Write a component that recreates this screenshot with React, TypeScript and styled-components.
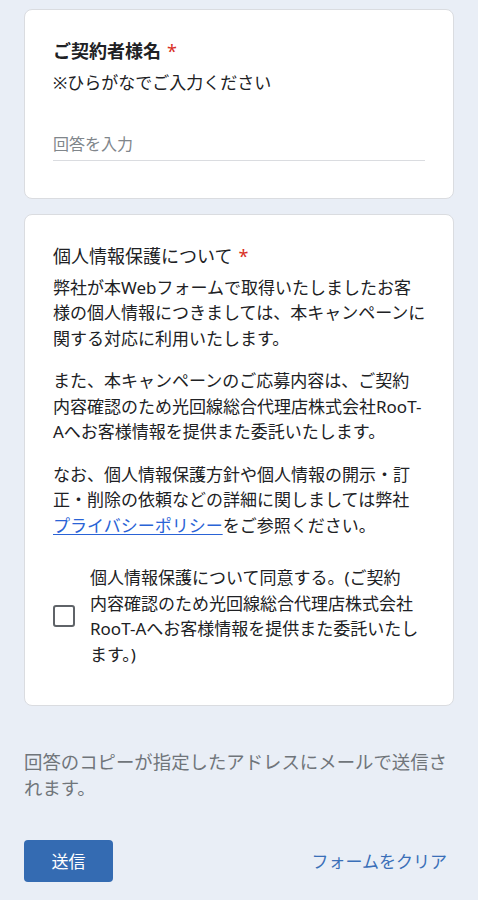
import React, { useState } from 'react';
import styled, { createGlobalStyle } from 'styled-components';

const GlobalStyle = createGlobalStyle`
  html, body {
    margin: 0;
    padding: 0;
    background: #e9eef6;
  }
  body {
    font-family: "Noto Sans", "Noto Sans CJK JP", sans-serif;
    color: #202124;
    -webkit-font-smoothing: antialiased;
  }
`;

const App = () => {
  const [agreed, setAgreed] = useState(false);
  const [name, setName] = useState('');

  return (
    <>
      <GlobalStyle />
      <Page>
        <Card>
          <QuestionTitle $bold>
            ご契約者様名<Required>*</Required>
          </QuestionTitle>
          <Description>※ひらがなでご入力ください</Description>
          <InputWrap>
            <TextInput
              value={name}
              onChange={(e) => setName(e.target.value)}
              placeholder="回答を入力"
            />
          </InputWrap>
        </Card>

        <Card>
          <QuestionTitle>
            個人情報保護について<Required>*</Required>
          </QuestionTitle>
          <Body>
            <Paragraph>
              弊社が本Webフォームで取得いたしましたお客<br />
              様の個人情報につきましては、本キャンペーンに<br />
              関する対応に利用いたします。
            </Paragraph>
            <Paragraph>
              また、本キャンペーンのご応募内容は、ご契約<br />
              内容確認のため光回線総合代理店株式会社RooT-<br />
              Aへお客様情報を提供また委託いたします。
            </Paragraph>
            <Paragraph>
              なお、個人情報保護方針や個人情報の開示・訂<br />
              正・削除の依頼などの詳細に関しましては弊社<br />
              <Link href="#">プライバシーポリシー</Link>をご参照ください。
            </Paragraph>
          </Body>

          <CheckRow onClick={() => setAgreed(!agreed)}>
            <CheckBox $checked={agreed} />
            <CheckLabel>
              個人情報保護について同意する。(ご契約<br />
              内容確認のため光回線総合代理店株式会社<br />
              RooT-Aへお客様情報を提供また委託いたし<br />
              ます。)
            </CheckLabel>
          </CheckRow>
        </Card>

        <Notice>回答のコピーが指定したアドレスにメールで送信されます。</Notice>

        <Actions>
          <SubmitButton type="button">送信</SubmitButton>
          <ClearButton type="button">フォームをクリア</ClearButton>
        </Actions>
      </Page>
    </>
  );
};

const Page = styled.div`
  display: flex;
  flex-direction: column;
  gap: 15px;
  padding: 9px 24px 19px 24px;
`;

const Card = styled.section`
  background: #ffffff;
  border: 1px solid #dadce0;
  border-radius: 8px;
  padding: 28px 26px 37px 28px;
`;

const QuestionTitle = styled.div<{ $bold?: boolean }>`
  font-size: 18px;
  line-height: 27px;
  font-weight: ${({ $bold }) => ($bold ? 700 : 400)};
  color: #202124;
`;

const Required = styled.span`
  color: #d93025;
  margin-left: 6px;
  font-weight: 400;
`;

const Description = styled.div`
  margin-top: 5px;
  font-size: 17px;
  line-height: 25.5px;
  color: #202124;
`;

const InputWrap = styled.div`
  margin-top: 36px;
  margin-right: 2px;
  border-bottom: 1px solid #dadce0;
`;

const TextInput = styled.input`
  display: block;
  width: 100%;
  box-sizing: border-box;
  border: none;
  outline: none;
  background: transparent;
  padding: 0 0 4px 0;
  height: 28px;
  font-family: inherit;
  font-size: 16px;
  line-height: 24px;
  color: #202124;

  &::placeholder {
    color: #80868b;
  }
`;

const Body = styled.div`
  margin-top: 5px;
`;

const Paragraph = styled.p`
  margin: 0 0 17px 0;
  font-size: 17px;
  line-height: 25.5px;
  color: #202124;

  &:last-child {
    margin-bottom: 0;
  }
`;

const Link = styled.a`
  color: #2a63d6;
  text-decoration: underline;
  text-underline-offset: 2px;
`;

const CheckRow = styled.div`
  margin-top: 27px;
  display: flex;
  align-items: center;
  gap: 15px;
  cursor: pointer;
`;

const CheckBox = styled.div<{ $checked: boolean }>`
  flex: none;
  width: 22px;
  height: 22px;
  box-sizing: border-box;
  border: 2px solid ${({ $checked }) => ($checked ? '#346bb2' : '#5f6368')};
  background: ${({ $checked }) => ($checked ? '#346bb2' : 'transparent')};
  border-radius: 3px;
`;

const CheckLabel = styled.div`
  font-size: 17px;
  line-height: 25.7px;
  color: #202124;
`;

const Notice = styled.p`
  margin: 28px 0 0 0;
  font-size: 18.4px;
  line-height: 26px;
  color: #70757a;
`;

const Actions = styled.div`
  margin-top: 24px;
  display: flex;
  align-items: center;
  justify-content: space-between;
`;

const SubmitButton = styled.button`
  width: 89px;
  height: 42px;
  border: none;
  border-radius: 4px;
  background: #346bb2;
  color: #ffffff;
  font-family: inherit;
  font-size: 17px;
  cursor: pointer;
`;

const ClearButton = styled.button`
  border: none;
  background: transparent;
  padding: 0 7px;
  height: 42px;
  color: #3a6fb8;
  font-family: inherit;
  font-size: 17px;
  cursor: pointer;
`;

export default App;
